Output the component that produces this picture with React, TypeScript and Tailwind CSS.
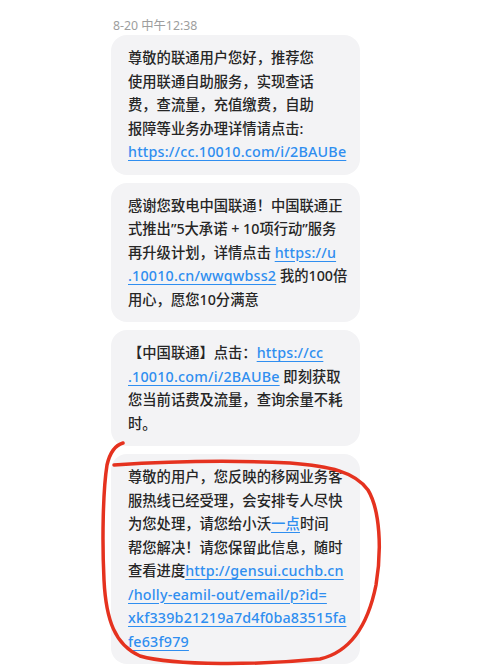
import React from "react";

const FONT = { fontFamily: '"Noto Sans", "Noto Sans CJK SC", sans-serif' };

function L({ children }: { children: React.ReactNode }) {
  return (
    <span className="tracking-[0.2px] text-[#2f8ef0] underline decoration-[#2f8ef0] underline-offset-[3px] decoration-1">
      {children}
    </span>
  );
}

function Bubble({ children }: { children: React.ReactNode }) {
  return (
    <div className="w-[249px] rounded-[16px] bg-[#f3f3f5] px-[17px] py-[11px] text-[14.3px] font-medium leading-[23.5px] text-[#262626] whitespace-nowrap">
      {children}
    </div>
  );
}

export default function App() {
  return (
    <div className="relative h-[667px] w-[500px] overflow-hidden bg-white" style={FONT}>
      <div className="flex flex-col gap-2 pl-[111px] pt-[18px]">
        <div className="-mb-[7px] h-[16px] pl-[2px] text-[12.3px] leading-[16px] text-[#9d9d9d]">
          8-20 中午12:38
        </div>
        <Bubble>
          尊敬的联通用户您好，推荐您
          <br />
          使用联通自助服务，实现查话
          <br />
          费，查流量，充值缴费，自助
          <br />
          报障等业务办理详情请点击:
          <br />
          <L>https://cc.10010.com/i/2BAUBe</L>
        </Bubble>
        <Bubble>
          感谢您致电中国联通！中国联通正
          <br />
          式推出”5大承诺 + 10项行动”服务
          <br />
          再升级计划，详情点击 <L>https://u</L>
          <br />
          <L>.10010.cn/wwqwbss2</L> 我的100倍
          <br />
          用心，愿您10分满意
        </Bubble>
        <Bubble>
          【中国联通】点击：<L>https://cc</L>
          <br />
          <L>.10010.com/i/2BAUBe</L> 即刻获取
          <br />
          您当前话费及流量，查询余量不耗
          <br />
          时。
        </Bubble>
        <Bubble>
          尊敬的用户，您反映的移网业务客
          <br />
          服热线已经受理，会安排专人尽快
          <br />
          为您处理，请您给小沃<L>一点</L>时间
          <br />
          帮您解决！请您保留此信息，随时
          <br />
          查看进度<L>http://gensui.cuchb.cn</L>
          <br />
          <L>/holly-eamil-out/email/p?id=</L>
          <br />
          <L>xkf339b21219a7d4f0ba83515fa</L>
          <br />
          <L>fe63f979</L>
        </Bubble>
      </div>
      <svg
        className="pointer-events-none absolute left-0 top-0"
        width="500"
        height="667"
        viewBox="0 0 500 667"
      >
        <path
          d="M123,443 C116,445 110,452 107,465 C103,490 102,540 104,580 C106,620 115,645 140,656 C175,666 260,665 320,659 C350,652 368,625 376,585 C382,550 380,510 368,490 C355,472 330,466 290,463 C230,460 160,462 114,465"
          fill="none"
          stroke="#e5321f"
          strokeWidth="3.5"
          strokeLinecap="round"
          strokeLinejoin="round"
        />
      </svg>
    </div>
  );
}
